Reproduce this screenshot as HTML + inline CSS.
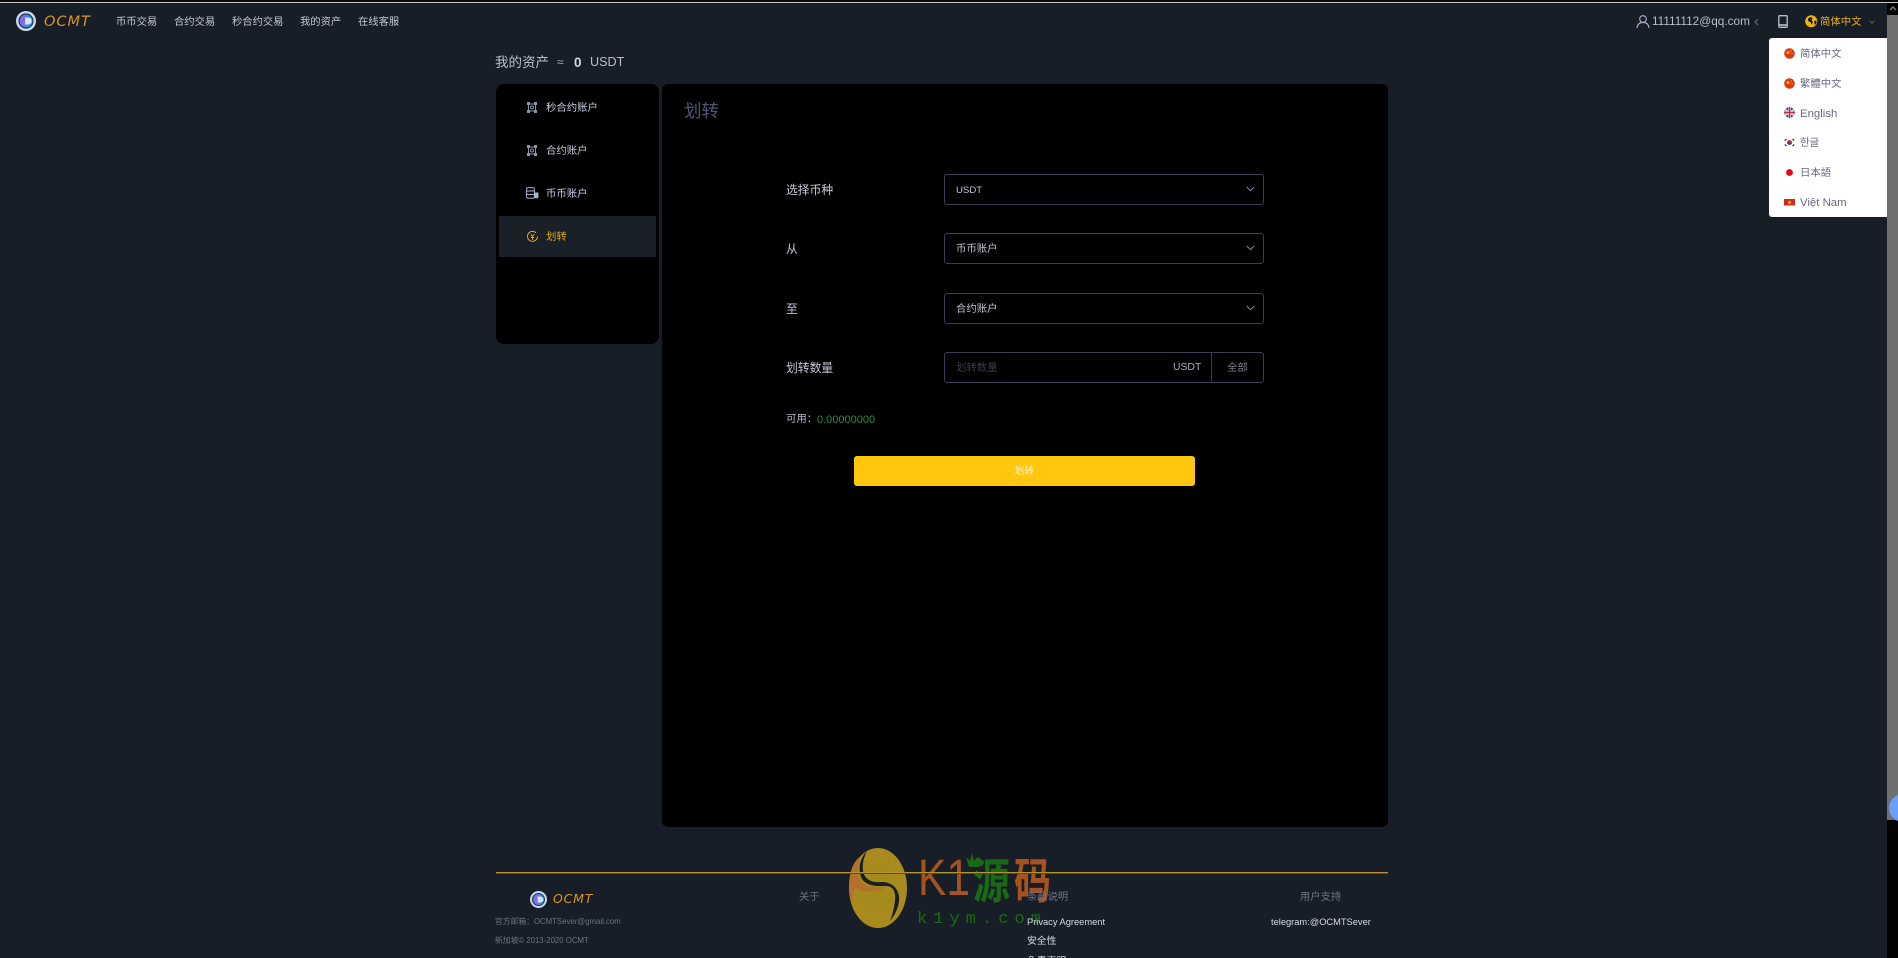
<!DOCTYPE html>
<html lang="zh">
<head>
<meta charset="utf-8">
<title>OCMT</title>
<style>
html,body{margin:0;padding:0;width:1898px;height:958px;overflow:hidden;background:#181e28;}
body{position:relative;font-family:"Liberation Sans","Noto Sans CJK SC",sans-serif;}
.t{position:absolute;white-space:nowrap;line-height:1;filter:blur(.25px);}
.b{position:absolute;}
svg{position:absolute;overflow:visible;}
.nav{font-size:10.3px;color:#c3c8d6;top:18px;}
.lg{font-size:10.4px;color:#666a80;left:1800px;}
.side{font-size:10.4px;color:#c3c8de;left:546px;}
.lab{font-size:11.8px;color:#c6cad6;left:786px;}
.sel{position:absolute;left:944px;width:318px;height:29px;border:1px solid #3b3d57;border-radius:3px;box-sizing:content-box;}
.val{font-size:10.4px;color:#bfc3d0;left:956px;}
.ft{font-size:10.3px;color:#6f7383;}
.fl{font-size:9.3px;color:#d5d9e6;}
.fs{font-size:7.8px;color:#6d7280;left:495px;}
.logo-t{font-family:"DejaVu Sans",sans-serif;font-style:italic;color:#d9941c;font-weight:400;}
</style>
</head>
<body>
<!-- top strip -->
<div class="b" style="left:0;top:0;width:1898px;height:2px;background:#0a0a0a"></div>
<div class="b" style="left:0;top:2px;width:1898px;height:1px;background:#c9c9c9"></div>

<!-- header logo -->
<svg style="left:16px;top:11px" width="20" height="20" viewBox="0 0 20 20">
<circle cx="10" cy="10" r="10" fill="#c6dcec"/>
<circle cx="10" cy="10" r="7.6" fill="#27304a"/>
<circle cx="10" cy="10" r="6.4" fill="#7d6cf0"/>
<path d="M10 3.6a6.4 6.4 0 0 1 0 12.8z" fill="#2f8fe0"/>
<path d="M9 6.5h3.2a3.5 3.5 0 0 1 0 7H9z" fill="#d8e6f4"/>
</svg>
<div class="t logo-t" style="left:44px;top:15px;font-size:14.5px;letter-spacing:1px">OCMT</div>
<div class="t nav" style="left:116px">币币交易</div>
<div class="t nav" style="left:174px">合约交易</div>
<div class="t nav" style="left:232px">秒合约交易</div>
<div class="t nav" style="left:300px">我的资产</div>
<div class="t nav" style="left:358px">在线客服</div>

<!-- header right -->
<svg style="left:1636px;top:15px" width="14" height="13" viewBox="0 0 14 13" fill="none" stroke="#a9b1c8" stroke-width="1.1">
<circle cx="7" cy="4" r="3.3"/><path d="M1 13c.4-3.6 2.6-5.6 6-5.6s5.6 2 6 5.6"/>
</svg>
<div class="t" style="left:1652px;top:16px;font-size:11.8px;color:#b6bccb">11111112@qq.com</div>
<svg style="left:1754px;top:18px" width="5" height="8" viewBox="0 0 5 8" fill="none" stroke="#6d7282" stroke-width="1"><path d="M4 1L1 4l3 3"/></svg>
<svg style="left:1778px;top:15px" width="10" height="13" viewBox="0 0 10 13" fill="none" stroke="#b9bfce" stroke-width="1.3">
<rect x=".8" y=".7" width="8.4" height="11.6" rx="1"/><path d="M.8 10h8.4" stroke-width="1.6"/>
</svg>
<svg style="left:1805px;top:15px" width="12.5" height="12.5" viewBox="0 0 13 13">
<circle cx="6.5" cy="6.5" r="6.3" fill="#eeb40f"/>
<path d="M3 4l2.5-2 2.3 1-.8 2.5 1.2 2-1.4 2.5-1-2.5L3.5 6.5z" fill="#181e28"/>
<path d="M9.5 6.5l2.3-1 .2 3-2 2z" fill="#181e28"/>
</svg>
<div class="t" style="left:1820px;top:18px;font-size:10.4px;color:#e6ae12">简体中文</div>
<svg style="left:1869px;top:20px" width="6" height="4" viewBox="0 0 8 5" fill="none" stroke="#a5831f" stroke-width="1"><path d="M1 1l3 3 3-3"/></svg>

<!-- scrollbar -->
<div class="b" style="left:1887px;top:3px;width:11px;height:955px;background:#030303"></div>
<div class="b" style="left:1887px;top:15px;width:11px;height:805px;background:#6f6f6f"></div>
<svg style="left:1889px;top:6px" width="8" height="5" viewBox="0 0 8 5" fill="none" stroke="#7a7a7a" stroke-width="1.5"><path d="M1 4l3-3 3 3"/></svg>

<!-- dropdown -->
<div class="b" style="left:1769px;top:38px;width:118px;height:179px;background:#fff;border-radius:3px 0 0 3px"></div>
<svg style="left:1784px;top:48px" width="11" height="11" viewBox="0 0 11 11"><circle cx="5.5" cy="5.5" r="5.3" fill="#de3a10"/><circle cx="4" cy="4.5" r="1.5" fill="#f1b62c"/><circle cx="7.3" cy="3" r=".6" fill="#f1b62c"/><circle cx="8" cy="5.5" r=".6" fill="#f1b62c"/></svg>
<div class="t lg" style="top:50px">简体中文</div>
<svg style="left:1784px;top:77.5px" width="11" height="11" viewBox="0 0 11 11"><circle cx="5.5" cy="5.5" r="5.3" fill="#de3a10"/><circle cx="4" cy="4.5" r="1.5" fill="#f1b62c"/><circle cx="7.3" cy="3" r=".6" fill="#f1b62c"/><circle cx="8" cy="5.5" r=".6" fill="#f1b62c"/></svg>
<div class="t lg" style="top:80px">繁體中文</div>
<svg style="left:1784px;top:107px" width="11" height="11" viewBox="0 0 11 11"><circle cx="5.5" cy="5.5" r="5.3" fill="#3f4f8f"/><path d="M1 2.5L10 8.5M10 2.5L1 8.5" stroke="#e9dfe2" stroke-width="1.4"/><path d="M5.5 0v11M0 5.5h11" stroke="#f0e8ea" stroke-width="2.6"/><path d="M5.5 0v11M0 5.5h11" stroke="#c7283b" stroke-width="1.4"/></svg>
<div class="t lg" style="top:109px;font-size:11.4px">English</div>
<svg style="left:1784px;top:137px" width="11" height="11" viewBox="0 0 11 11"><path d="M5.5 3a2.5 2.5 0 0 1 2.5 2.5H3A2.5 2.5 0 0 1 5.5 3z" fill="#cd2e3a"/><path d="M5.5 8A2.5 2.5 0 0 1 3 5.5h5A2.5 2.5 0 0 1 5.5 8z" fill="#214a9c"/><path d="M.8 3.5l1.7-1.5M.8 7.5l1.7 1.5M10.2 3.5L8.5 2M10.2 7.5L8.5 9" stroke="#333" stroke-width="1.2"/></svg>
<div class="t lg" style="top:139px">한글</div>
<svg style="left:1784px;top:167px" width="11" height="11" viewBox="0 0 11 11"><circle cx="5.5" cy="5.5" r="3.4" fill="#e80012"/></svg>
<div class="t lg" style="top:169px">日本語</div>
<svg style="left:1784px;top:198px" width="11" height="9" viewBox="0 0 11 9"><rect width="11" height="6.5" y="1" fill="#d5281c"/><path d="M5.5 2.2l.6 1.5 1.5.1-1.2 1 .4 1.5-1.3-.9-1.300.9.4-1.500-1.200-1 1.500-.1z" fill="#f6d21a"/></svg>
<div class="t lg" style="top:198px;font-size:11.4px">Việt Nam</div>

<!-- asset head -->
<div class="t" style="left:495px;top:56px;font-size:13.5px;color:#b9bfcd">我的资产</div>
<div class="t" style="left:557px;top:56px;font-size:12px;color:#a9afbf">≈</div>
<div class="t" style="left:574px;top:56px;font-size:13.5px;font-weight:700;color:#d3d8e4">0</div>
<div class="t" style="left:590px;top:56px;font-size:12.6px;color:#b9bfcd">USDT</div>

<!-- sidebar -->
<div class="b" style="left:496px;top:84px;width:163px;height:260px;background:#000;border-radius:8px"></div>
<div class="b" style="left:499px;top:216px;width:157px;height:41px;background:#1a2028"></div>
<svg style="left:527px;top:101.5px" width="10" height="11" viewBox="0 0 10 11" fill="none" stroke="#8e93a6" stroke-width="1"><rect x="1.5" y="2" width="7" height="7"/><rect x=".5" y=".5" width="2" height="2" fill="#8e93a6"/><rect x="7.5" y=".5" width="2" height="2" fill="#8e93a6"/><rect x=".5" y="8.5" width="2" height="2" fill="#8e93a6"/><rect x="7.5" y="8.5" width="2" height="2" fill="#8e93a6"/><circle cx="5" cy="5.5" r="1.5"/></svg>
<div class="t side" style="top:104px">秒合约账户</div>
<svg style="left:527px;top:144.5px" width="10" height="11" viewBox="0 0 10 11" fill="none" stroke="#8e93a6" stroke-width="1"><rect x="1.5" y="2" width="7" height="7"/><rect x=".5" y=".5" width="2" height="2" fill="#8e93a6"/><rect x="7.5" y=".5" width="2" height="2" fill="#8e93a6"/><rect x=".5" y="8.5" width="2" height="2" fill="#8e93a6"/><rect x="7.5" y="8.5" width="2" height="2" fill="#8e93a6"/><circle cx="5" cy="5.5" r="1.5"/></svg>
<div class="t side" style="top:147px">合约账户</div>
<svg style="left:526px;top:187px" width="13" height="12" viewBox="0 0 13 12" fill="none" stroke="#aab2cc" stroke-width="1"><rect x=".6" y=".6" width="7.8" height="10.6" rx="1.5"/><path d="M.6 4h7.8M.6 7.5h7.8"/><rect x="8.4" y="5.5" width="4" height="5.7" fill="#aab2cc" stroke="none"/></svg>
<div class="t side" style="top:190px">币币账户</div>
<svg style="left:527px;top:231px" width="11" height="11" viewBox="0 0 11 11" fill="none" stroke="#e4aa1a" stroke-width="1"><path d="M9 1.8A5 5 0 1 0 10.5 5.5"/><path d="M3.8 3.2L5.5 5.5 7.2 3.2M5.5 5.5v3.5M3.8 6.500h3.400" stroke-width=".9"/></svg>
<div class="t side" style="top:233px;color:#e0a81a">划转</div>

<!-- main card -->
<div class="b" style="left:662px;top:84px;width:726px;height:743px;background:#000;border-radius:6px"></div>
<div class="t" style="left:684px;top:102.5px;font-size:17.5px;color:#4f5572">划转</div>

<div class="t lab" style="top:185px">选择币种</div>
<div class="sel" style="top:174px"></div>
<div class="t val" style="top:186px;font-size:9.6px">USDT</div>
<svg style="left:1246px;top:186px" width="9" height="6" viewBox="0 0 9 6" fill="none" stroke="#8b8fa3" stroke-width="1"><path d="M.8 1l3.7 3.7L8.2 1"/></svg>

<div class="t lab" style="top:244px">从</div>
<div class="sel" style="top:233px"></div>
<div class="t val" style="top:245px">币币账户</div>
<svg style="left:1246px;top:245px" width="9" height="6" viewBox="0 0 9 6" fill="none" stroke="#8b8fa3" stroke-width="1"><path d="M.8 1l3.7 3.7L8.2 1"/></svg>

<div class="t lab" style="top:304px">至</div>
<div class="sel" style="top:293px"></div>
<div class="t val" style="top:305px">合约账户</div>
<svg style="left:1246px;top:305px" width="9" height="6" viewBox="0 0 9 6" fill="none" stroke="#8b8fa3" stroke-width="1"><path d="M.8 1l3.7 3.7L8.2 1"/></svg>

<div class="t lab" style="top:363px">划转数量</div>
<div class="sel" style="top:352px"></div>
<div class="b" style="left:1211px;top:352px;width:1px;height:31px;background:#3b3d57"></div>
<div class="t val" style="top:364px;color:#3c3d46">划转数量</div>
<div class="t" style="left:1173px;top:363px;font-size:10.4px;color:#a9adba">USDT</div>
<div class="t" style="left:1227px;top:364px;font-size:10.4px;color:#777b8b">全部</div>

<div class="t" style="left:786px;top:415px;font-size:10.4px;color:#b9bdca">可用：</div>
<div class="t" style="left:817px;top:415px;font-size:11px;color:#2f8a4a">0.00000000</div>

<div class="b" style="left:854px;top:456px;width:341px;height:29.5px;background:#ffc70e;border-radius:3px"></div>
<div class="t" style="left:1014.5px;top:466.5px;font-size:9.8px;color:#f7f0d4">划转</div>

<!-- watermark -->
<svg style="left:840px;top:830px" width="240" height="128" viewBox="0 0 240 128">
<defs>
<radialGradient id="g" cx=".5" cy=".5" r=".6"><stop offset="0" stop-color="#a08c18"/><stop offset="1" stop-color="#ad8a20"/></radialGradient>
</defs>
<ellipse cx="38" cy="58" rx="29" ry="40" fill="url(#g)"/>
<path d="M9 58C9 44 12 32 21 26C16 38 17 47 22 52C28 59 40 58 50 55C40 62 24 64 16 58C13 62 12 68 13 72C10 68 9 63 9 58z" fill="#b5702c"/>
<path d="M27 21C20 28 17 40 22 49C28 57 38 56 46 56C53 56 56 62 55 70C54 79 52 86 50 91C56 84 60 74 59 66C57 56 50 52 42 52C34 53 26 51 23.5 43C21.5 35 24 27 27 21z" fill="#181e28"/>
<text x="78" y="65" font-family="Liberation Sans,sans-serif" font-size="51" fill="#a5531f" textLength="52" lengthAdjust="spacingAndGlyphs">K1</text>
<text transform="translate(133 68) scale(.88 1.15)" font-family="Noto Sans CJK SC,sans-serif" font-size="42" font-weight="700" fill="#186a15">源</text>
<text transform="translate(174 68) scale(.88 1.15)" font-family="Noto Sans CJK SC,sans-serif" font-size="42" font-weight="700" fill="#a5531f">码</text>
<path d="M129 37l-3-10 4 4 2-8 2 8 3-4 1 7 3-4-1 7z" fill="#186a15"/>
<text x="77" y="93" font-family="Liberation Mono,monospace" font-size="17" fill="#186a15" textLength="124">k1ym.com</text>
</svg>

<!-- footer -->
<div class="b" style="left:496px;top:872px;width:892px;height:1px;background:#b3922f"></div>
<div class="b" style="left:496px;top:873px;width:892px;height:1px;background:#5a4b22"></div>
<svg style="left:530px;top:891px" width="17" height="17" viewBox="0 0 20 20">
<circle cx="10" cy="10" r="10" fill="#c6dcec"/>
<circle cx="10" cy="10" r="7.6" fill="#27304a"/>
<circle cx="10" cy="10" r="6.4" fill="#7d6cf0"/>
<path d="M10 3.6a6.4 6.4 0 0 1 0 12.8z" fill="#2f8fe0"/>
<path d="M9 6.5h3.2a3.5 3.5 0 0 1 0 7H9z" fill="#d8e6f4"/>
</svg>
<div class="t logo-t" style="left:553px;top:893px;font-size:12.5px;letter-spacing:.8px">OCMT</div>
<div class="t fs" style="top:917.5px">官方邮箱：OCMTSever@gmail.com</div>
<div class="t fs" style="top:936.5px">新加坡© 2013-2020 OCMT</div>
<div class="t ft" style="left:799px;top:893px">关于</div>
<div class="t ft" style="left:1027px;top:893px">条款说明</div>
<div class="t ft" style="left:1300px;top:893px">用户支持</div>
<div class="t fl" style="left:1027px;top:918px">Privacy Agreement</div>
<div class="t fl" style="left:1027px;top:937px;font-size:9.8px">安全性</div>
<div class="t fl" style="left:1027px;top:957px;font-size:9.8px">免责声明</div>
<div class="t fl" style="left:1271px;top:918px">telegram:@OCMTSever</div>

<!-- blue float -->
<div class="b" style="left:1887px;top:790px;width:11px;height:36px;overflow:hidden">
<div class="b" style="left:2px;top:4px;width:28px;height:28px;border-radius:50%;background:#6b9eff"></div>
</div>
</body>
</html>
